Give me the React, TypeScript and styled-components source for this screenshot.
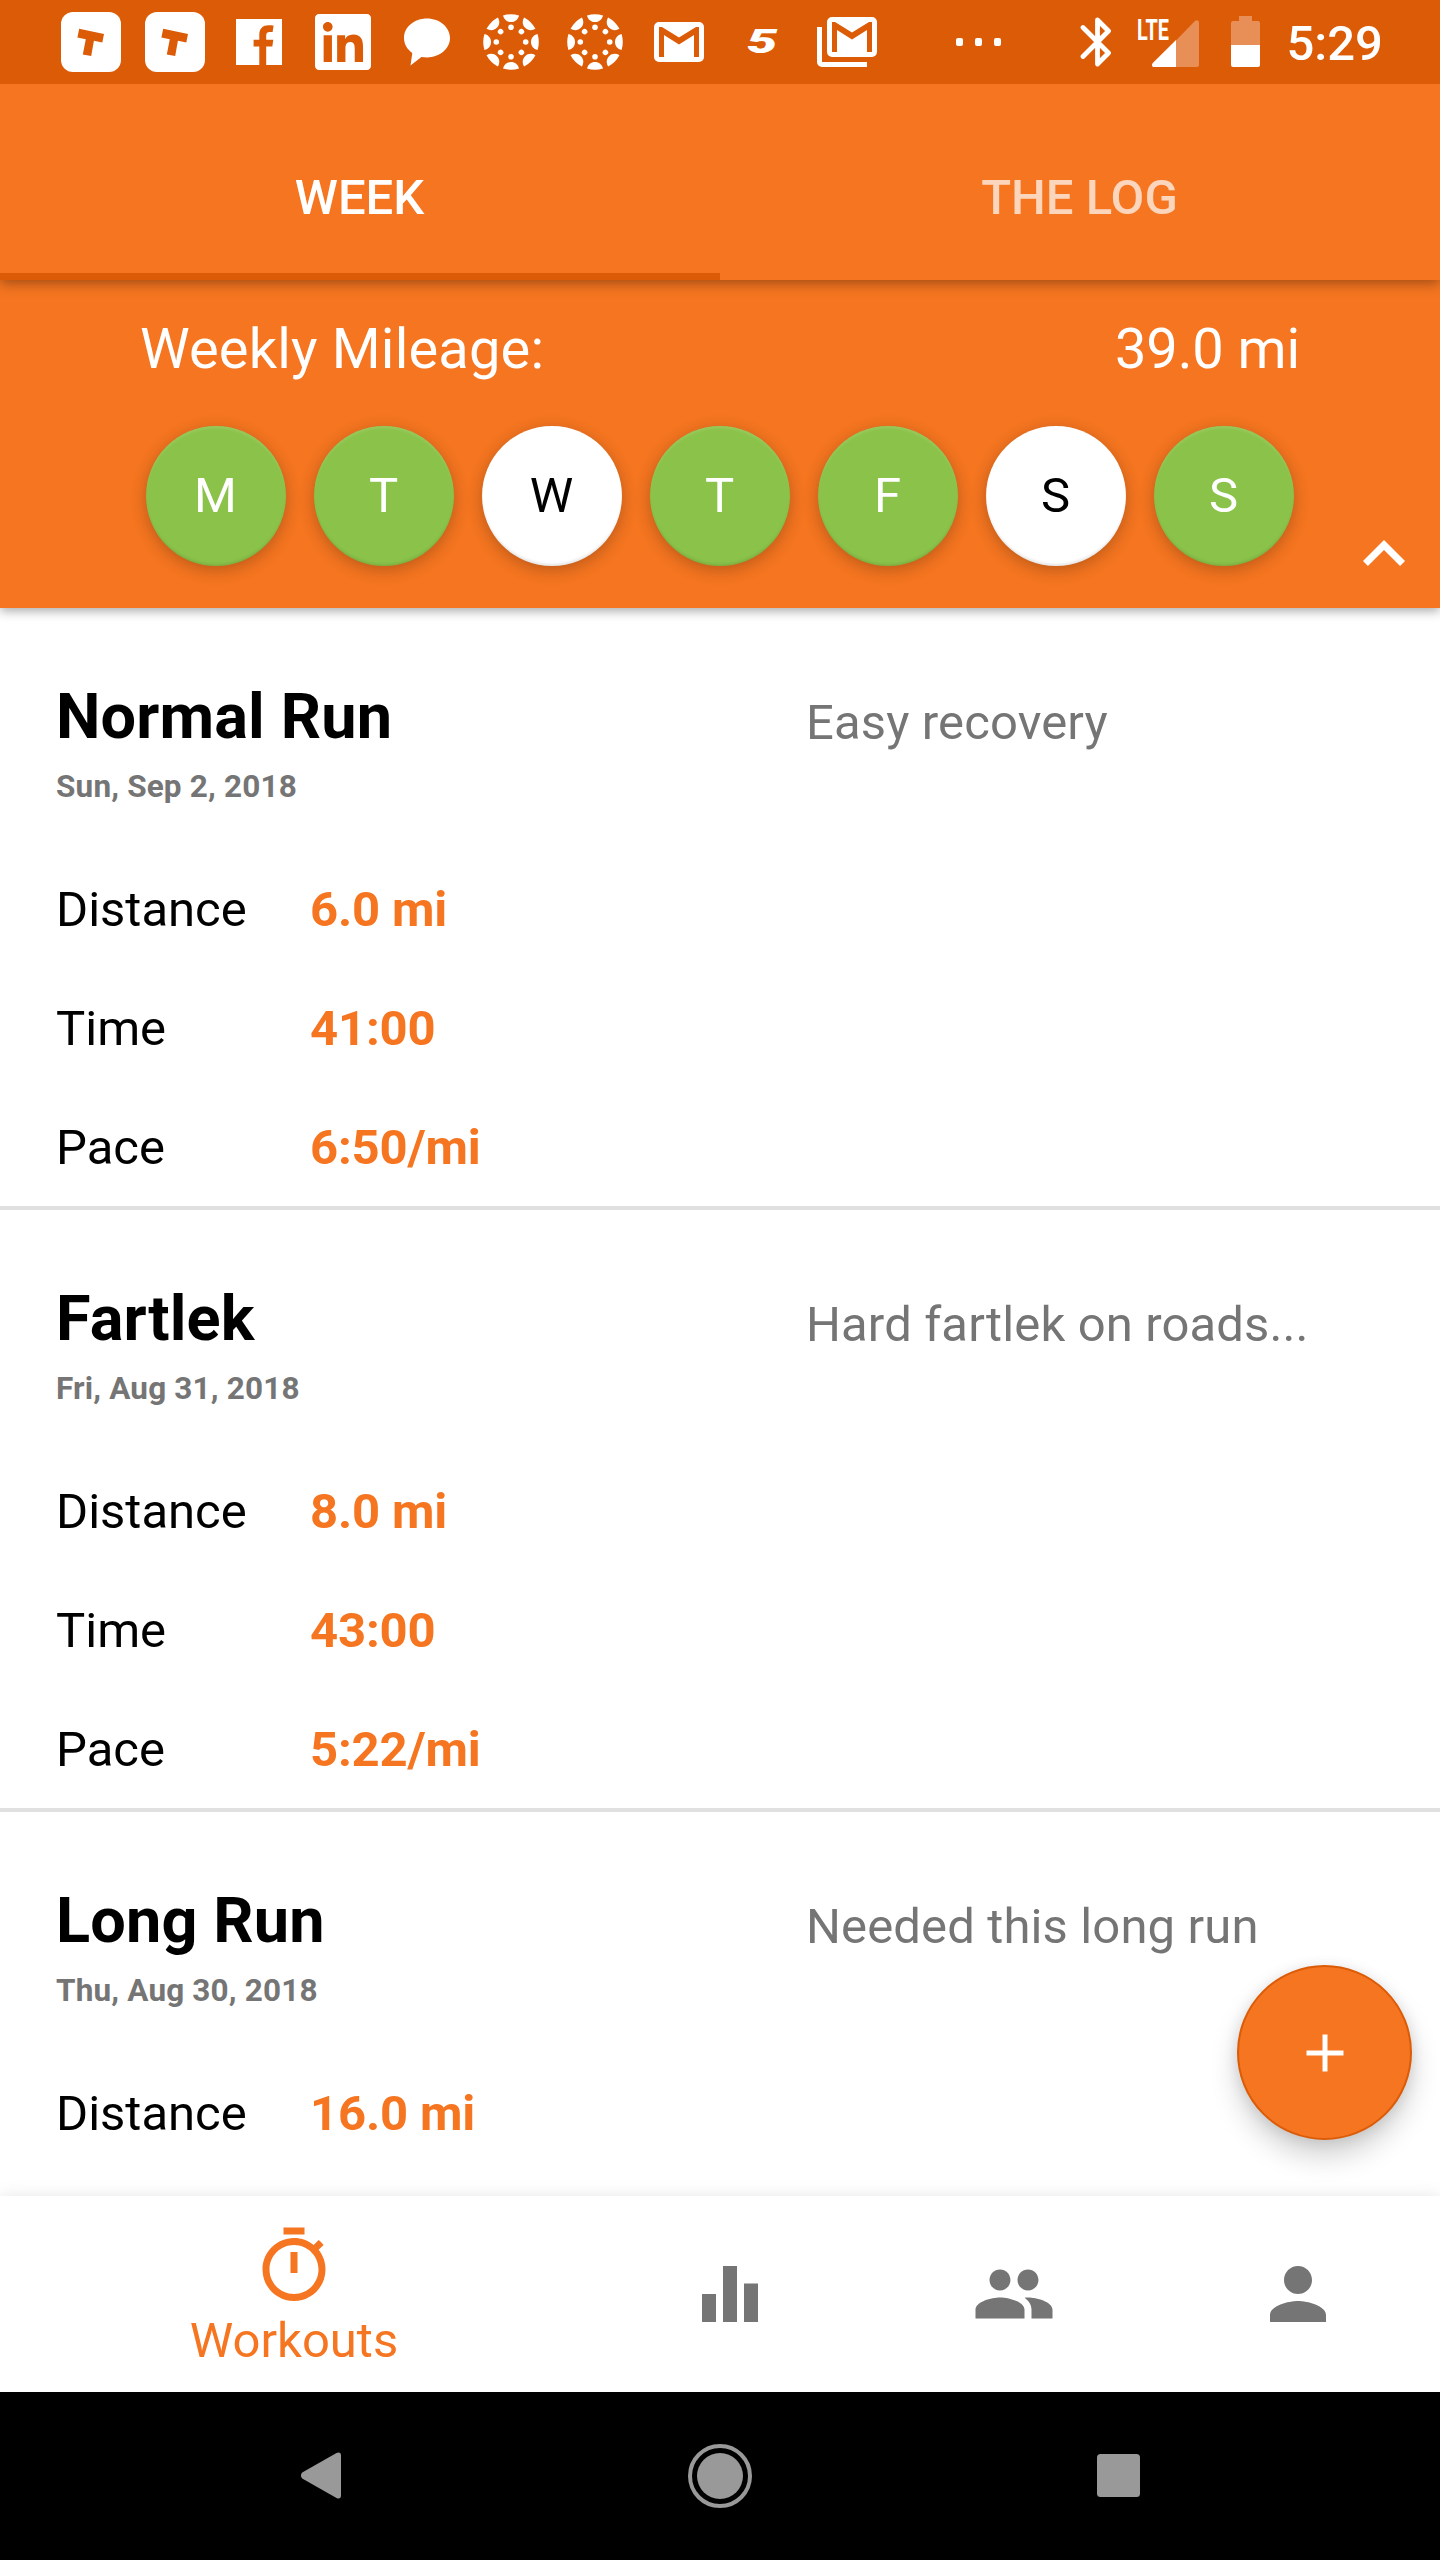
import React from "react";
import styled, { createGlobalStyle } from "styled-components";
import { FaLinkedin } from "react-icons/fa";

const ORANGE = "#f57520";
const DARK_ORANGE = "#dc5b07";
const GREEN = "#8bc34a";
const GREY = "#757575";

const GlobalStyle = createGlobalStyle`
  *, *::before, *::after { box-sizing: border-box; }
  body { margin: 0; background: #fff; }
  svg { display: block; flex: none; }
`;

const Screen = styled.div`
  width: 1440px;
  height: 2560px;
  display: flex;
  flex-direction: column;
  overflow: hidden;
  position: relative;
  background: #fff;
  font-family: Roboto, "Liberation Sans", sans-serif;
  font-size: 49px;
  line-height: 58px;
`;

/* ---------- status bar ---------- */

const StatusBar = styled.header`
  flex: none;
  height: 84px;
  display: flex;
  align-items: center;
  padding-left: 49px;
  background: ${DARK_ORANGE};
  color: #fff;
`;

const Slot = styled.div`
  width: 84px;
  height: 84px;
  flex: none;
  display: flex;
  align-items: center;
  justify-content: center;
`;

const FiveMark = styled.span`
  font-size: 34px;
  font-weight: 900;
  font-style: italic;
  line-height: 40px;
  transform: translate(-0.5px, -1px) scaleX(1.6);
`;

const MoreDots = styled.div`
  display: flex;
  gap: 12px;
  margin-left: 67px;
`;

const Dot = styled.i`
  width: 7px;
  height: 8px;
  border-radius: 2px;
  background: #fff;
`;

const SystemIcons = styled.div`
  display: flex;
  align-items: center;
  margin-left: 79px;
`;

const Clock = styled.span`
  margin: 3px 0 0 26.5px;
  font-weight: 500;
`;

/* ---------- tabs ---------- */

const Tabs = styled.nav`
  flex: none;
  height: 196px;
  display: grid;
  grid-template-columns: 1fr 1fr;
  background: ${ORANGE};
  position: relative;
  z-index: 2;
  box-shadow: 0 3px 12px rgba(0, 0, 0, 0.36);
  clip-path: inset(0 0 -30px 0);
`;

const Tab = styled.div<{ $active?: boolean }>`
  display: flex;
  justify-content: center;
  padding: 85px 1px 0 0;
  font-weight: 500;
  color: ${(p) => (p.$active ? "#fff" : "rgba(255,255,255,0.7)")};
  border-bottom: 7px solid ${(p) => (p.$active ? DARK_ORANGE : "transparent")};
`;

/* ---------- weekly summary ---------- */

const Summary = styled.section`
  flex: none;
  height: 328px;
  display: grid;
  grid-template-columns: 140px 1fr 140px;
  background: ${ORANGE};
  color: #fff;
  position: relative;
  z-index: 1;
  box-shadow: 0 3px 10px rgba(0, 0, 0, 0.34);
`;

const SummaryBody = styled.div`
  grid-column: 2;
  padding-top: 36px;
`;

const Mileage = styled.div`
  display: flex;
  justify-content: space-between;
  font-size: 56px;
  line-height: 66px;
`;

const MileageLabel = styled.span`
  letter-spacing: 0.17px;
`;

const MileageValue = styled.span`
  letter-spacing: -0.1px;
`;

const Days = styled.div`
  display: flex;
  justify-content: space-between;
  margin: 44px 6px 0;
`;

const Day = styled.div<{ $done: boolean }>`
  width: 140px;
  height: 140px;
  border-radius: 50%;
  display: flex;
  align-items: center;
  justify-content: center;
  padding-right: 1px;
  background: ${(p) => (p.$done ? GREEN : "#fff")};
  color: ${(p) => (p.$done ? "#fff" : "#000")};
  box-shadow: 0 4px 16px rgba(0, 0, 0, 0.24),
    inset 0 -3px 3px -1px rgba(0, 0, 0, 0.1),
    inset 0 3px 3px -1px rgba(255, 255, 255, 0.12);
`;

const Collapse = styled.div`
  grid-column: 3;
  align-self: end;
  justify-self: end;
  margin: 0 14px 12px 0;
`;

/* ---------- workouts ---------- */

const List = styled.main`
  flex: 1;
  min-height: 0;
  overflow: hidden;
`;

const Workout = styled.article`
  height: 602px;
  display: grid;
  grid-template-columns: 750px 1fr;
  padding: 72px 56px 0;
  border-bottom: 4px solid #e0e0e0;
`;

const Title = styled.h2`
  margin: 0;
  font-size: 63px;
  line-height: 74px;
  font-weight: 700;
  letter-spacing: 0.15px;
`;

const DateText = styled.div`
  margin: 14px 0 76px;
  font-size: 31.5px;
  line-height: 37px;
  font-weight: 700;
  letter-spacing: 0.17px;
  color: ${GREY};
`;

const Stats = styled.dl`
  margin: 0;
  display: grid;
  grid-template-columns: 254px 1fr;
  row-gap: 61px;
`;

const StatLabel = styled.dt`
  color: #000;
`;

const StatValue = styled.dd`
  margin: 0;
  font-weight: 700;
  letter-spacing: -0.15px;
  color: ${ORANGE};
`;

const Note = styled.p`
  margin: 14px 0 0;
  color: ${GREY};
  letter-spacing: 0.13px;
  white-space: nowrap;
`;

const Fab = styled.button`
  position: absolute;
  left: 1237px;
  top: 1965px;
  width: 175px;
  height: 175px;
  padding: 0;
  border: 2px solid ${DARK_ORANGE};
  border-radius: 50%;
  background: ${ORANGE};
  display: flex;
  align-items: center;
  justify-content: center;
  box-shadow: 0 16px 28px rgba(0, 0, 0, 0.18), 0 2px 14px rgba(0, 0, 0, 0.1);
`;

/* ---------- bottom bars ---------- */

const BottomNav = styled.nav`
  flex: none;
  height: 196px;
  display: grid;
  grid-template-columns: 588px repeat(3, 284px);
  background: #fff;
  color: ${GREY};
  position: relative;
  box-shadow: 0 0 16px rgba(0, 0, 0, 0.1);
`;

const NavItem = styled.div<{ $active?: boolean }>`
  display: flex;
  flex-direction: column;
  align-items: center;
  justify-content: ${(p) => (p.$active ? "flex-start" : "center")};
  padding-top: ${(p) => (p.$active ? "27.5px" : "0")};
  color: ${(p) => (p.$active ? ORANGE : GREY)};
`;

const NavLabel = styled.span`
  margin-top: 4.5px;
`;

const SystemNav = styled.footer`
  flex: none;
  height: 168px;
  display: flex;
  align-items: center;
  justify-content: center;
  padding: 0 1px 1px 0;
  background: #000;
  position: relative;
`;

/* ---------- icons ---------- */

const MaterialIcon = ({ d }: { d: string }) => (
  <svg width="84" height="84" viewBox="0 0 24 24" fill="currentColor">
    <path d={d} />
  </svg>
);

const HammerBadge = () => (
  <svg width="60" height="60" viewBox="0 0 60 60">
    <rect width="60" height="60" rx="12" fill="#fff" />
    <path
      d="M18.200 16.800L43 22l-1.700 8.400-8.400-1.700L30.200 44l-8.400-1.600 3-15.200-8.400-1.800z"
      fill={DARK_ORANGE}
    />
  </svg>
);

const FacebookIcon = () => (
  <svg width="46" height="46" viewBox="0 0 46 46" fill="#fff">
    <path d="M0 0H46V46H30.200V27.500H36.300L37.300 20.700H30.200V16.500C30.200 14.200 31 13 33.700 13H36.600L37.600 6.600C36.600 6.400 34.600 6.200 32.400 6.200C27 6.200 23.300 9.500 23.300 15.500V20.700H17.600V27.500H23.300V46H0Z" />
  </svg>
);

const BubbleIcon = () => (
  <svg width="48" height="48" viewBox="0 0 48 48" fill="#fff">
    <path d="M24 .5C11.200 .5 1 9 1 20c0 6 3 11.200 8.300 14.900L7.500 47.500 18.400 38.900c1.800.3 3.700.5 5.600.5 12.800 0 23-8.700 23-19.400S36.800.5 24 .5z" />
  </svg>
);

const CanvasIcon = () => (
  <svg width="56" height="56" viewBox="-28 -28 56 56" fill="#fff">
    {[0, 45, 90, 135, 180, 225, 270, 315].map((a) => (
      <g key={a} transform={`rotate(${a})`}>
        <path d="M-8 -26.600A28 28 0 0 1 8 -26.600C7 -22.500 4 -20 0 -20S-7 -22.500 -8 -26.600Z" />
        <circle cy="-14.700" r="2.800" />
      </g>
    ))}
  </svg>
);

const ENVELOPE =
  "M5 0H45a5 5 0 0 1 5 5V35a5 5 0 0 1-5 5H5a5 5 0 0 1-5-5V5a5 5 0 0 1 5-5ZM5 5V35H10V13L25 22.500 40 13V35H45V5H42L25 15.500 8 5Z";

const GmailIcon = () => (
  <svg width="50" height="40" viewBox="0 0 50 40" fill="#fff" fillRule="evenodd">
    <path d={ENVELOPE} />
  </svg>
);

const GmailStackIcon = () => (
  <svg width="60" height="50" viewBox="0 0 60 50" fill="#fff" fillRule="evenodd">
    <path d={ENVELOPE} transform="translate(10 0)" />
    <path d="M0 10H5V45H50V50H5a5 5 0 0 1-5-5Z" />
  </svg>
);

const BluetoothIcon = () => (
  <svg
    width="32"
    height="50"
    viewBox="0 0 32 50"
    fill="none"
    stroke="#fff"
    strokeWidth="4.800"
    strokeLinejoin="round"
    strokeLinecap="round"
  >
    <path d="M3 10.500L28.500 36 17.500 47V3L28.500 14 3 39.500" />
  </svg>
);

const SignalIcon = () => (
  <svg width="64" height="70" viewBox="0 -10 64 70" fill="#fff">
    <text
      x="1"
      y="22.800"
      fontSize="30"
      fontWeight="700"
      textLength="32"
      lengthAdjust="spacingAndGlyphs"
      fontFamily="Roboto, sans-serif"
    >
      LTE
    </text>
    <path
      opacity=".32"
      d="M40 23.500L58.700 4.200C60.500 2.400 63 3.200 63 5.700V48a2 2 0 0 1-2 2H40Z"
    />
    <path d="M40 23V50H18c-2 0-2.800-2.500-1.200-4.100Z" />
  </svg>
);

const BatteryIcon = () => (
  <svg width="29" height="51" viewBox="0 0 29 51" fill="#fff">
    <path opacity=".32" d="M8 0H21V5H27a2 2 0 0 1 2 2V29H0V7a2 2 0 0 1 2-2H8Z" />
    <path d="M0 29H29V49a2 2 0 0 1-2 2H2a2 2 0 0 1-2-2Z" />
  </svg>
);

const BackIcon = () => (
  <svg width="40" height="47" viewBox="0 0 40 47" fill="#999">
    <path d="M1.200 20.500L35.500 1C38 -.3 40 .8 40 3.200V43.800C40 46.200 38 47.300 35.500 46L1.200 26.500C-.4 25 -.4 22 1.200 20.500Z" />
  </svg>
);

const HomeIcon = () => (
  <svg width="64" height="64" viewBox="0 0 64 64">
    <circle cx="32" cy="32" r="30" fill="none" stroke="#999" strokeWidth="4" />
    <circle cx="32" cy="32" r="23" fill="#999" />
  </svg>
);

const RecentsIcon = () => (
  <svg width="43" height="43" viewBox="0 0 43 43">
    <rect width="43" height="43" rx="3.500" fill="#999" />
  </svg>
);

const NavCell = styled.div`
  width: 398.5px;
  display: flex;
  justify-content: center;
`;

const TIMER =
  "M15 1H9v2h6V1zm-4 13h2V8h-2v6zm8.030-6.610l1.420-1.420c-.43-.51-.9-.99-1.410-1.410l-1.420 1.420C16.070 4.740 14.120 4 12 4c-4.970 0-9 4.030-9 9s4.020 9 9 9 9-4.030 9-9c0-2.120-.74-4.070-1.970-5.610zM12 20c-3.870 0-7-3.130-7-7s3.130-7 7-7 7 3.130 7 7-3.130 7-7 7z";
const BARS = "M10 20h4V4h-4v16zm-6 0h4v-8H4v8zM16 9v11h4V9h-4z";
const PEOPLE =
  "M16 11c1.660 0 2.990-1.340 2.990-3S17.660 5 16 5c-1.660 0-3 1.340-3 3s1.340 3 3 3zm-8 0c1.660 0 2.990-1.340 2.990-3S9.660 5 8 5C6.340 5 5 6.340 5 8s1.340 3 3 3zm0 2c-2.330 0-7 1.170-7 3.500V19h14v-2.500c0-2.330-4.670-3.500-7-3.500zm8 0c-.29 0-.62.02-.97.05 1.160.84 1.970 1.970 1.970 3.450V19h6v-2.500c0-2.330-4.670-3.500-7-3.500z";
const PERSON =
  "M12 12c2.210 0 4-1.790 4-4s-1.790-4-4-4-4 1.790-4 4 1.790 4 4 4zm0 2c-2.670 0-8 1.340-8 4v2h16v-2c0-2.660-5.330-4-8-4z";
const CHEVRON_UP = "M7.410 15.410L12 10.830l4.590 4.580L18 14l-6-6-6 6z";

/* ---------- data ---------- */

const days = [
  { letter: "M", done: true },
  { letter: "T", done: true },
  { letter: "W", done: false },
  { letter: "T", done: true },
  { letter: "F", done: true },
  { letter: "S", done: false },
  { letter: "S", done: true },
];

const workouts = [
  {
    title: "Normal Run",
    date: "Sun, Sep 2, 2018",
    note: "Easy recovery",
    stats: [
      ["Distance", "6.0 mi"],
      ["Time", "41:00"],
      ["Pace", "6:50/mi"],
    ],
  },
  {
    title: "Fartlek",
    date: "Fri, Aug 31, 2018",
    note: "Hard fartlek on roads...",
    stats: [
      ["Distance", "8.0 mi"],
      ["Time", "43:00"],
      ["Pace", "5:22/mi"],
    ],
  },
  {
    title: "Long Run",
    date: "Thu, Aug 30, 2018",
    note: "Needed this long run",
    stats: [["Distance", "16.0 mi"]],
  },
];

const BatterySlot = styled.div`
  margin: -1px 0 0 31px;
`;

const SignalSlot = styled.div`
  margin-left: 24px;
`;

export default function App() {
  return (
    <>
      <GlobalStyle />
      <Screen>
        <StatusBar>
          <Slot><HammerBadge /></Slot>
          <Slot><HammerBadge /></Slot>
          <Slot><FacebookIcon /></Slot>
          <Slot><FaLinkedin size={64} /></Slot>
          <Slot><BubbleIcon /></Slot>
          <Slot><CanvasIcon /></Slot>
          <Slot><CanvasIcon /></Slot>
          <Slot><GmailIcon /></Slot>
          <Slot><FiveMark>5</FiveMark></Slot>
          <Slot><GmailStackIcon /></Slot>
          <MoreDots><Dot /><Dot /><Dot /></MoreDots>
          <SystemIcons>
            <BluetoothIcon />
            <SignalSlot><SignalIcon /></SignalSlot>
            <BatterySlot><BatteryIcon /></BatterySlot>
            <Clock>5:29</Clock>
          </SystemIcons>
        </StatusBar>

        <Tabs>
          <Tab $active>WEEK</Tab>
          <Tab>THE LOG</Tab>
        </Tabs>

        <Summary>
          <SummaryBody>
            <Mileage>
              <MileageLabel>Weekly Mileage:</MileageLabel>
              <MileageValue>39.0 mi</MileageValue>
            </Mileage>
            <Days>
              {days.map((d, i) => (
                <Day key={i} $done={d.done}>{d.letter}</Day>
              ))}
            </Days>
          </SummaryBody>
          <Collapse><MaterialIcon d={CHEVRON_UP} /></Collapse>
        </Summary>

        <List>
          {workouts.map((w) => (
            <Workout key={w.title}>
              <div>
                <Title>{w.title}</Title>
                <DateText>{w.date}</DateText>
                <Stats>
                  {w.stats.map(([label, value]) => (
                    <React.Fragment key={label}>
                      <StatLabel>{label}</StatLabel>
                      <StatValue>{value}</StatValue>
                    </React.Fragment>
                  ))}
                </Stats>
              </div>
              <Note>{w.note}</Note>
            </Workout>
          ))}
        </List>

        <BottomNav>
          <NavItem $active>
            <MaterialIcon d={TIMER} />
            <NavLabel>Workouts</NavLabel>
          </NavItem>
          <NavItem><MaterialIcon d={BARS} /></NavItem>
          <NavItem><MaterialIcon d={PEOPLE} /></NavItem>
          <NavItem><MaterialIcon d={PERSON} /></NavItem>
        </BottomNav>

        <SystemNav>
          <NavCell><BackIcon /></NavCell>
          <NavCell><HomeIcon /></NavCell>
          <NavCell><RecentsIcon /></NavCell>
        </SystemNav>

        <Fab aria-label="Add workout">
          <svg width="38" height="38" viewBox="0 0 38 38" fill="#fff">
            <path d="M16.500 .5H21.500V16.500H37.500V21.500H21.500V37.500H16.500V21.500H.5V16.500H16.500Z" />
          </svg>
        </Fab>
      </Screen>
    </>
  );
}
